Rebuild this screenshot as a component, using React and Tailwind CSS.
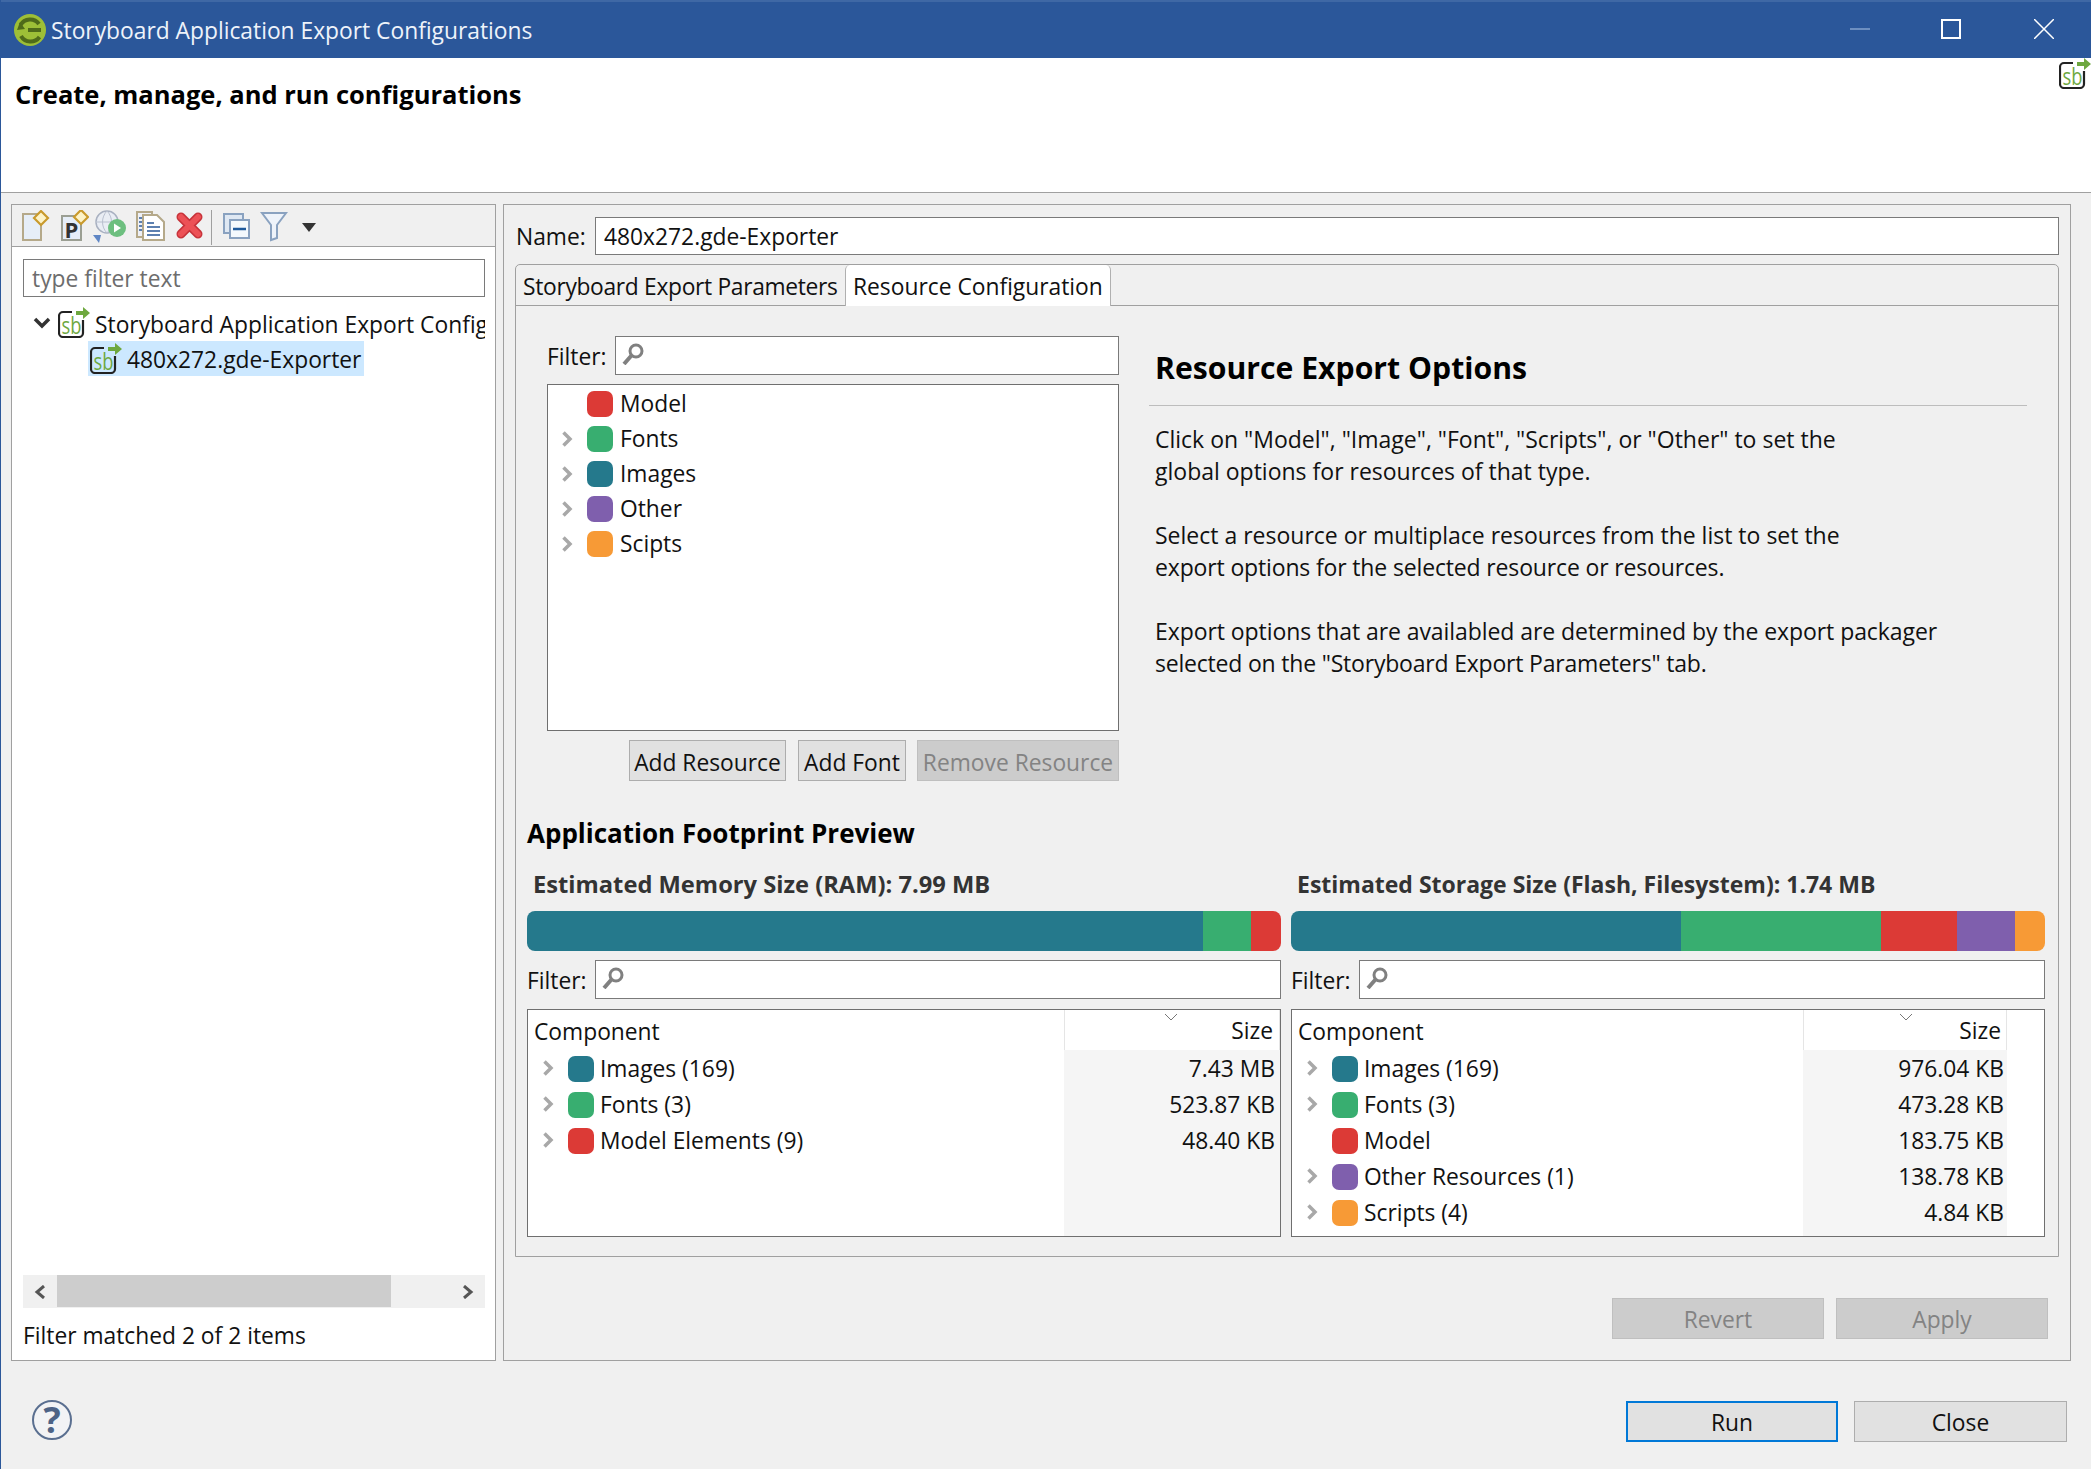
import React from "react";

const F = { fontFamily: '"Open Sans", "Noto Sans", sans-serif' };
const C = { model: "bg-[#dc3a36]", fonts: "bg-[#38ae70]", images: "bg-[#25798c]", other: "bg-[#7f5fad]", scripts: "bg-[#f79a36]" };

function Sb({ className = "" }) {
  return (
    <svg viewBox="0 0 32 31" className={"w-[32px] h-[31px] shrink-0 " + className}>
      <path d="M14 5H5a4 4 0 0 0-4 4v17a4 4 0 0 0 4 4h16a4 4 0 0 0 4-4V13" fill="none" stroke="#222" strokeWidth="2.200" />
      <text x="3.500" y="27" fontSize="24" fill="#6ea83f" fontFamily="Open Sans" textLength="20" lengthAdjust="spacingAndGlyphs">sb</text>
      <path d="M18 4h7V0l7 6-7 6V8h-7z" fill="#6ea83f" />
    </svg>
  );
}
function Chevron({ className = "" }) {
  return (
    <svg viewBox="0 0 12 18" className={"w-[12px] h-[18px] shrink-0 " + className}>
      <path d="M2.500 2.500l6.500 6.500-6.500 6.500" fill="none" stroke="#a8a8a8" strokeWidth="3.500" />
    </svg>
  );
}
function Mag() {
  return (
    <svg viewBox="0 0 22 22" className="w-[22px] h-[22px]">
      <circle cx="14" cy="8" r="6" fill="none" stroke="#808080" strokeWidth="3" />
      <path d="M9.500 12.500L2 21" stroke="#808080" strokeWidth="4" />
    </svg>
  );
}
function Swatch({ c }) {
  return <span className={"w-[26px] h-[26px] rounded-[7px] shrink-0 " + c} />;
}
function Filter({ className = "", inputWidth }) {
  return (
    <div className={"flex items-center " + className}>
      <span className="w-[68px] pt-[2px]">Filter:</span>
      <div className={"h-[39px] bg-white border border-[#7a7a7a] flex items-center pl-[6px] pb-[3px] " + inputWidth}>
        <Mag />
      </div>
    </div>
  );
}
function TreeRow({ c, label, arrow = true }) {
  return (
    <div className="h-[35px] flex items-center">
      <span className="w-[18px] mr-[11px] flex justify-center">{arrow && <Chevron />}</span>
      <Swatch c={c} />
      <span className="ml-[7px] whitespace-nowrap">{label}</span>
    </div>
  );
}
function Table({ rows, w, sizeW, rightGap, cellPad, headPad, sortLeft }) {
  return (
    <div className={"h-[228px] bg-white border border-[#6f6f6f] flex overflow-hidden " + w}>
      <div className="flex-1 min-w-0">
        <div className="h-[41px] pl-[6px] flex items-center pt-[2px]">Component</div>
        {rows.map((r) => (
          <div key={r.label} className="h-[36px] flex items-center pl-[13px]">
            <span className="w-[14px] mr-[13px] flex justify-center pb-[2px]">{r.arrow !== false && <Chevron />}</span>
            <Swatch c={r.c} />
            <span className="ml-[6px] whitespace-nowrap">{r.label}</span>
          </div>
        ))}
      </div>
      <div className={"bg-[#f5f5f5] shrink-0 " + sizeW}>
        <div className={"h-[40px] bg-white border-l border-r border-[#e5e5e5] relative flex items-center justify-end pt-[2px] " + headPad}>
          <svg viewBox="0 0 14 8" className={"w-[14px] h-[8px] absolute top-[3px] " + sortLeft}>
            <path d="M1 1l6 6 6-6" fill="none" stroke="#777" strokeWidth="1" />
          </svg>
          <span>Size</span>
        </div>
        <div className="pt-[1px]">
          {rows.map((r) => (
            <div key={r.label} className={"h-[36px] flex items-center justify-end " + cellPad}>{r.size}</div>
          ))}
        </div>
      </div>
      {rightGap}
    </div>
  );
}
function Bar({ segs }) {
  return (
    <div className="h-[40px] w-[754px] flex overflow-hidden rounded-[8px]">
      {segs.map(([c, w], i) => (
        <div key={i} className={c} style={{ width: w }} />
      ))}
    </div>
  );
}
function Btn({ children, className = "" }) {
  return <div className={"flex items-center justify-center border " + className}>{children}</div>;
}

function Toolbar() {
  return (
    <div className="h-[42px] bg-[#f0f0f0] flex items-center pl-[6px] pt-[3px] border-b border-[#a0a0a0] shrink-0">
      <svg viewBox="0 0 34 34" className="w-[34px] h-[34px] shrink-0">
        <path d="M5 4h18v26H5z" fill="#e6eef8" stroke="#b5a98a" strokeWidth="2" />
        <path d="M23 1l7 7-7 7-7-7z" fill="#fdf3c8" stroke="#c99a2c" strokeWidth="2.200" />
      </svg>
      <svg viewBox="0 0 34 34" className="w-[34px] h-[34px] ml-[3px] shrink-0">
        <path d="M7 6h19v24H7z" fill="#e6eef8" stroke="#9b9f93" strokeWidth="2" />
        <text x="9.500" y="28" fontSize="22" fontWeight="700" fill="#333" fontFamily="Open Sans">P</text>
        <path d="M26 0l7 7-7 7-7-7z" fill="#fdf3c8" stroke="#c99a2c" strokeWidth="2.200" />
      </svg>
      <svg viewBox="0 0 34 34" className="w-[34px] h-[34px] ml-[3px] shrink-0">
        <circle cx="15" cy="12" r="11" fill="#e9edf4" stroke="#a9b1c1" strokeWidth="1.500" />
        <path d="M4 12h22M15 1c-6 6-6 16 0 22M15 1c6 6 6 16 0 22" fill="none" stroke="#b9c0cf" strokeWidth="1" />
        <circle cx="25" cy="18" r="9" fill="#6dbf7f" />
        <path d="M22 13.500v9l7-4.500z" fill="#fff" />
        <path d="M1 25h8l-2 8z" fill="#5f86c4" />
      </svg>
      <svg viewBox="0 0 34 34" className="w-[34px] h-[34px] ml-[6px] shrink-0">
        <path d="M5 2h15v25H5z" fill="#eef0f6" stroke="#b5a98a" strokeWidth="2" />
        <path d="M11 5h14l7 7v18H11z" fill="#fff" stroke="#b5a98a" strokeWidth="2" />
        <path d="M15 13h7M15 17h13M15 21h13M15 25h13" stroke="#5d80b0" strokeWidth="2" />
        <path d="M7 8h3M7 12h3M7 16h3M7 20h3" stroke="#5d80b0" strokeWidth="2" />
      </svg>
      <svg viewBox="0 0 34 34" className="w-[34px] h-[34px] ml-[6px] shrink-0">
        <path d="M9 7l17 17M26 7L9 24" stroke="#c7333a" strokeWidth="9" strokeLinecap="round" />
        <path d="M9 7l17 17M26 7L9 24" stroke="#ec5156" strokeWidth="6" strokeLinecap="round" />
      </svg>
      <span className="w-px h-[35px] bg-[#a0a0a0] ml-[5px] shrink-0" />
      <svg viewBox="0 0 34 34" className="w-[34px] h-[34px] ml-[7px] shrink-0">
        <path d="M5 4h19v19H5z" fill="#dfe8f3" stroke="#8aa2c0" strokeWidth="2" />
        <path d="M11 10h19v18H11z" fill="#f4f9fd" stroke="#8aa2c0" strokeWidth="2" />
        <path d="M14 19h13" stroke="#1f5a9c" strokeWidth="2.500" />
      </svg>
      <svg viewBox="0 0 34 34" className="w-[34px] h-[34px] ml-[3px] shrink-0">
        <path d="M6 3h24l-9 12v13l-6 2V15z" fill="#eef3fa" stroke="#8aa2c0" strokeWidth="2" />
      </svg>
      <svg viewBox="0 0 14 9" className="w-[14px] h-[9px] ml-[12px] shrink-0">
        <path d="M0 0h14l-7 9z" fill="#333" />
      </svg>
    </div>
  );
}

export default function App() {
  return (
    <div style={F} className="w-[2091px] h-[1469px] overflow-hidden bg-[#f0f0f0] text-[22.800px] leading-[32px] text-[#111] flex flex-col border-l border-[#2b579a]">
      {/* Title bar */}
      <div className="h-[58px] bg-[#2b579a] border-t-2 border-[#3f68a5] flex items-center shrink-0 text-white -ml-px">
        <svg viewBox="0 0 32 32" className="ml-[14px] w-[32px] h-[32px] shrink-0">
          <circle cx="16" cy="16" r="16" fill="#9dbf37" />
          <path d="M25 10A11 11 0 0 0 6.500 11M7 22a11 11 0 0 0 18.500 1" fill="none" stroke="#4f6b1a" strokeWidth="4" />
          <path d="M3 16l8-1-5-7zM14 14h13v4H14z" fill="#4f6b1a" />
        </svg>
        <span className="ml-[5px] pt-[2px] whitespace-nowrap text-[#eef3fa] flex-1">Storyboard Application Export Configurations</span>
        <span className="w-[20px] h-[2px] bg-[#6d8fc0] mr-[71px] mb-[2px]" />
        <span className="w-[20px] h-[20px] border-2 border-white mr-[73px] mb-[2px]" />
        <svg viewBox="0 0 20 20" className="w-[20px] h-[20px] mr-[37px] mb-[2px]">
          <path d="M0 0l20 20M20 0L0 20" stroke="#fff" strokeWidth="1.500" />
        </svg>
      </div>
      {/* Header */}
      <div className="h-[135px] bg-white border-b border-[#a0a0a0] shrink-0 flex justify-between pl-[14px]">
        <div className="font-bold text-[25.500px] text-black pt-[20px]">Create, manage, and run configurations</div>
        <Sb />
      </div>
      {/* Body */}
      <div className="flex pl-[10px] pt-[11px] gap-[7px]">
        {/* Left */}
        <div className="w-[485px] h-[1157px] border border-[#a0a0a0] bg-white flex flex-col">
          <Toolbar />
          <div className="pl-[11px] pr-[10px] pt-[12px] flex-1 flex flex-col">
            <div className="h-[38px] border border-[#7a7a7a] flex items-center pl-[8px] text-[#6d6d6d] pt-[1px]">type filter text</div>
            <div className="mt-[8px] flex items-center h-[36px] pl-[10px] overflow-hidden whitespace-nowrap">
              <svg viewBox="0 0 18 12" className="w-[18px] h-[12px] shrink-0"><path d="M2 2l7 7 7-7" fill="none" stroke="#333" strokeWidth="3.500" /></svg>
              <Sb className="ml-[7px] mr-[5px] mb-[1px]" />
              <span className="pt-[3px]">Storyboard Application Export Configurations</span>
            </div>
            <div className="ml-[65px] w-[276px] h-[35px] bg-[#cce8ff] flex items-center">
              <Sb className="ml-[2px] mr-[5px]" />
              <span className="whitespace-nowrap pt-[2px]">480x272.gde-Exporter</span>
            </div>
            <div className="flex-1" />
            <div className="h-[33px] bg-[#f0f0f0] flex items-center">
              <svg viewBox="0 0 12 14" className="w-[12px] h-[14px] ml-[11px] mr-[11px] shrink-0"><path d="M10 1L3 7l7 6" fill="none" stroke="#555" strokeWidth="3" /></svg>
              <div className="w-[334px] h-[32px] bg-[#cdcdcd] mb-[1px]" />
              <div className="flex-1" />
              <svg viewBox="0 0 12 14" className="w-[12px] h-[14px] mr-[11px] shrink-0"><path d="M2 1l7 6-7 6" fill="none" stroke="#555" strokeWidth="3" /></svg>
            </div>
            <div className="h-[52px] flex items-center pt-[4px] whitespace-nowrap">Filter matched 2 of 2 items</div>
          </div>
        </div>
        {/* Right */}
        <div className="w-[1568px] h-[1157px] border border-[#a0a0a0] flex flex-col">
          <div className="flex items-center pl-[12px] pt-[11px] h-[50px]">
            <span className="w-[79px] pt-[2px]">Name:</span>
            <div className="w-[1464px] h-[38px] bg-white border border-[#7a7a7a] flex items-center pl-[8px] pt-[2px]">480x272.gde-Exporter</div>
          </div>
          <div className="ml-[11px] mt-[9px] w-[1544px] h-[993px] border border-[#a0a0a0] rounded-t-[5px] flex flex-col">
            <div className="h-[41px] border-b border-[#a0a0a0] flex items-center shrink-0">
              <div className="w-[329px] pl-[7px] pt-[4px] whitespace-nowrap tracking-[-0.320px]">Storyboard Export Parameters</div>
              <div className="w-[266px] h-[41px] bg-white border-x border-[#b0b0b0] rounded-t-[5px] -mb-px flex items-center pl-[7px] pt-[3px] whitespace-nowrap">Resource Configuration</div>
            </div>
            <div className="flex pl-[31px] pt-[30px] shrink-0">
              <div className="w-[572px]">
                <Filter inputWidth="w-[504px]" className="h-[39px]" />
                <div className="mt-[9px] h-[347px] bg-white border border-[#6f6f6f] pl-[10px] pt-[1px]">
                  <TreeRow c={C.model} label="Model" arrow={false} />
                  <TreeRow c={C.fonts} label="Fonts" />
                  <TreeRow c={C.images} label="Images" />
                  <TreeRow c={C.other} label="Other" />
                  <TreeRow c={C.scripts} label="Scipts" />
                </div>
                <div className="flex justify-end mt-[9px] gap-[12px]">
                  <Btn className="w-[157px] h-[41px] bg-[#e1e1e1] border-[#adadad] pt-[4px]">Add Resource</Btn>
                  <Btn className="w-[108px] h-[41px] bg-[#e1e1e1] border-[#adadad] pt-[4px]">Add Font</Btn>
                  <Btn className="w-[202px] h-[41px] bg-[#cccccc] border-[#bfbfbf] text-[#838383] pt-[4px] -ml-[1px]">Remove Resource</Btn>
                </div>
              </div>
              <div className="ml-[30px] w-[878px]">
                <div className="font-bold text-[30.200px] leading-[40px] pl-[6px] pt-[12px] text-black">Resource Export Options</div>
                <div className="mt-[17px] border-t border-[#bdbdbd] pl-[6px] pt-[17px] text-[23px]">
                  <p>Click on "Model", "Image", "Font", "Scripts", or "Other" to set the<br />global options for resources of that type.</p>
                  <p className="mt-[32px]">Select a resource or multiplace resources from the list to set the<br /><span className="tracking-[-0.150px]">export options for the selected resource or resources.</span></p>
                  <p className="mt-[32px] tracking-[-0.070px]">Export options that are availabled are determined by the export packager<br /><span className="tracking-[-0.200px]">selected on the "Storyboard Export Parameters" tab.</span></p>
                </div>
              </div>
            </div>
            <div className="pl-[11px] mt-[34px] font-bold text-[26px] leading-[36px] text-black">Application Footprint Preview</div>
            <div className="flex pl-[11px] gap-[10px] mt-[17px]">
              <div className="w-[754px]">
                <div className="font-bold text-[23.700px] leading-[32px] text-[#333] pl-[6px]">Estimated Memory Size (RAM): 7.99 MB</div>
                <div className="mt-[11px]"><Bar segs={[[C.images, 676], [C.fonts, 48], [C.model, 30]]} /></div>
                <Filter inputWidth="w-[686px]" className="mt-[9px]" />
                <div className="mt-[10px]">
                  <Table w="w-[754px]" sizeW="w-[216px]" cellPad="pr-[5px]" headPad="pr-[6px]" sortLeft="left-[99px]" rows={[
                    { c: C.images, label: "Images (169)", size: "7.43 MB" },
                    { c: C.fonts, label: "Fonts (3)", size: "523.87 KB" },
                    { c: C.model, label: "Model Elements (9)", size: "48.40 KB" },
                  ]} />
                </div>
              </div>
              <div className="w-[754px]">
                <div className="font-bold text-[23px] leading-[32px] text-[#333] pl-[6px]">Estimated Storage Size (Flash, Filesystem): 1.74 MB</div>
                <div className="mt-[11px]"><Bar segs={[[C.images, 390], [C.fonts, 200], [C.model, 76], [C.other, 58], [C.scripts, 30]]} /></div>
                <Filter inputWidth="w-[686px]" className="mt-[9px]" />
                <div className="mt-[10px]">
                  <Table w="w-[754px]" sizeW="w-[204px]" cellPad="pr-[3px]" headPad="pr-[5px]" sortLeft="left-[95px]" rightGap={<div className="w-[37px] shrink-0" />} rows={[
                    { c: C.images, label: "Images (169)", size: "976.04 KB" },
                    { c: C.fonts, label: "Fonts (3)", size: "473.28 KB" },
                    { c: C.model, label: "Model", size: "183.75 KB", arrow: false },
                    { c: C.other, label: "Other Resources (1)", size: "138.78 KB" },
                    { c: C.scripts, label: "Scripts (4)", size: "4.84 KB" },
                  ]} />
                </div>
              </div>
            </div>
          </div>
          <div className="flex justify-end gap-[12px] pr-[22px] mt-[41px]">
            <Btn className="w-[212px] h-[41px] bg-[#cccccc] border-[#bfbfbf] text-[#838383] pt-[2px]">Revert</Btn>
            <Btn className="w-[212px] h-[41px] bg-[#cccccc] border-[#bfbfbf] text-[#838383] pt-[2px]">Apply</Btn>
          </div>
        </div>
      </div>
      {/* Footer */}
      <div className="flex items-center pl-[31px] pr-[24px] pt-[40px]">
        <svg viewBox="0 0 40 40" className="w-[40px] h-[40px] -mt-[3px]">
          <circle cx="20" cy="20" r="19" fill="#f2f3f5" stroke="#5a6f90" strokeWidth="2" />
          <text x="20" y="33" textAnchor="middle" fontSize="36" fontWeight="700" fill="#4d6386" fontFamily="Open Sans">?</text>
        </svg>
        <div className="flex-1" />
        <Btn className="w-[212px] h-[41px] bg-[#e1e1e1] border-2 border-[#0078d7] pt-[2px]">Run</Btn>
        <Btn className="w-[213px] h-[41px] ml-[16px] bg-[#e1e1e1] border-[#adadad] pt-[2px]">Close</Btn>
      </div>
    </div>
  );
}
